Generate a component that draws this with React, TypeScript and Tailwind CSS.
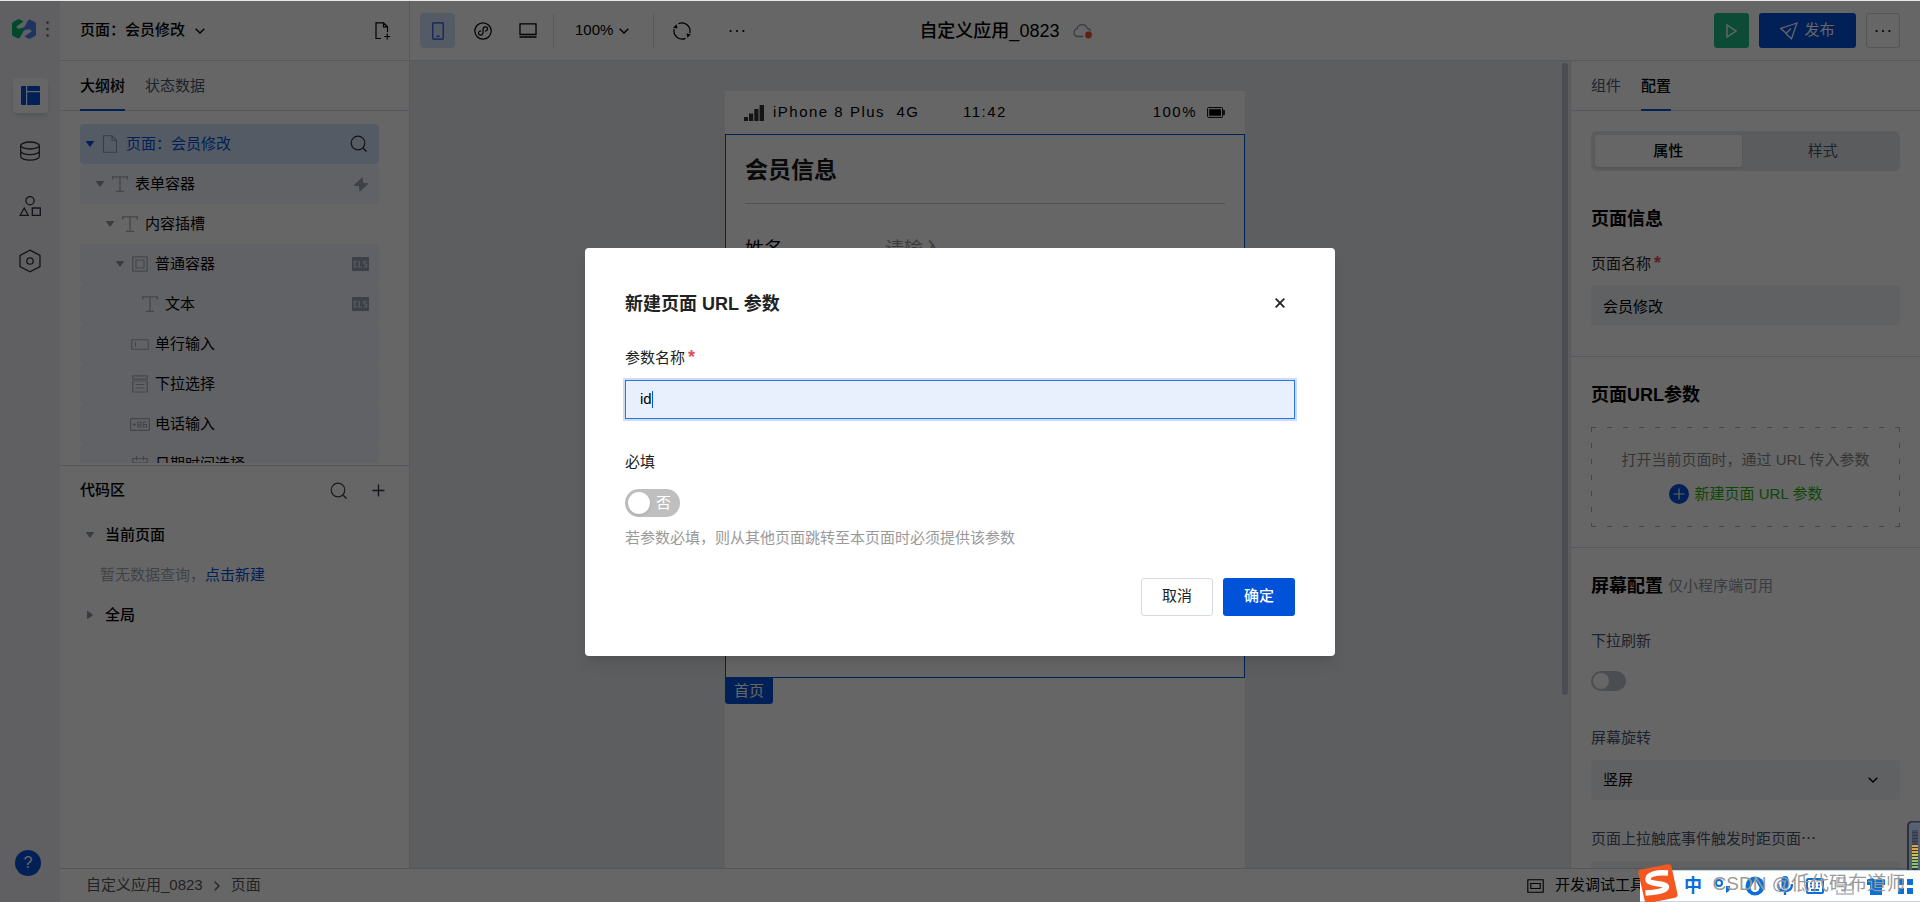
import type { ReactNode } from "react";

interface IconProps {
  className?: string;
}

interface TreeRow {
  label: string;
  icon: ReactNode;
  indent: string;
  open?: boolean;
  plain?: boolean;
  badge?: ReactNode;
}

function Search({ className = "" }: IconProps) {
  return (
    <svg className={className} width="18" height="18" viewBox="0 0 18 18" fill="none" stroke="currentColor">
      <circle cx="8" cy="8" r="6.8" strokeWidth="1.2" />
      <path d="M13 13l3.5 3.5" strokeWidth="1.5" />
    </svg>
  );
}

function ChevronDown({ className = "" }: IconProps) {
  return (
    <svg className={className} width="10" height="6" viewBox="0 0 10 6" fill="none" stroke="currentColor" strokeWidth="1.4">
      <path d="M.7.7L5 5 9.3.7" />
    </svg>
  );
}

function Caret({ className = "" }: IconProps) {
  return (
    <svg className={className} width="8" height="6" viewBox="0 0 8 6" fill="currentColor">
      <path d="M.5 0h7a.5.5 0 0 1 .4.8L4.4 5.6a.5.5 0 0 1-.8 0L.1.8A.5.5 0 0 1 .5 0z" />
    </svg>
  );
}

function Dots() {
  return (
    <svg width="16" height="4" viewBox="0 0 16 4" fill="currentColor">
      <circle cx="1.6" cy="2" r="1.1" />
      <circle cx="8" cy="2" r="1.1" />
      <circle cx="14.4" cy="2" r="1.1" />
    </svg>
  );
}

function TextIcon() {
  return (
    <svg width="16" height="16" viewBox="0 0 16 16" fill="none" stroke="currentColor" strokeWidth="1.3">
      <path d="M.7 3.5V.8h14.6v2.7M8 .8v14.4M4 15.3h8" />
    </svg>
  );
}

function BoxIcon() {
  return (
    <svg width="16" height="16" viewBox="0 0 16 16" fill="none" stroke="currentColor" strokeWidth="1.2">
      <path d="M.8.8h14.4v14.4H.8zM4 4h8v8H4z" />
    </svg>
  );
}

function InputIcon() {
  return (
    <svg width="18" height="11" viewBox="0 0 18 11" fill="none" stroke="currentColor" strokeWidth="1.1">
      <rect x=".7" y=".7" width="16.6" height="9.6" rx=".5" />
      <path d="M4.5 3v5" />
    </svg>
  );
}

function SelectIcon() {
  return (
    <svg width="16" height="18" viewBox="0 0 16 18" fill="none" stroke="currentColor" strokeWidth="1.2">
      <path d="M.8.8h14.4v3.4H.8zM.8 6h14.4v11H.8zM3.5 9.5h9M3.5 13h9" />
    </svg>
  );
}

function PhoneInputIcon() {
  return (
    <svg width="20" height="13" viewBox="0 0 20 13" fill="none" stroke="currentColor">
      <rect x=".6" y=".6" width="18.8" height="11.8" rx=".6" strokeWidth="1.2" />
      <path d="M2.500 6.500h3.600M4.300 4.700v3.600M8 4h3v5H8zM8 6.500h3M16.500 4h-3v5h3V6.500h-3" strokeWidth="1.2" />
    </svg>
  );
}

function CalendarIcon() {
  return (
    <svg width="16" height="16" viewBox="0 0 16 16" fill="none" stroke="currentColor" strokeWidth="1.2">
      <path d="M.8 2.5h14.4v12.7H.8zM.8 7h14.4M4.5 0v4.5M11.5 0v4.5" />
    </svg>
  );
}

function ClsBadge() {
  return (
    <svg width="17" height="14" viewBox="0 0 17 14">
      <rect width="17" height="14" rx="1" fill="#99a1b5" />
      <path d="M5.200 4.300H2.500v5.700h2.700M7.200 3.800V10h2.600M14.700 4.300h-2.700V7h2.500v3h-2.700" fill="none" stroke="#e2e5ec" strokeWidth="1.200" />
    </svg>
  );
}

function Bolt() {
  return (
    <svg width="16" height="15" viewBox="0 0 14 14" fill="#9aa3b5">
      <path d="M8.500 0L.3 7.600l.3.800H5L5.600 14l8.100-7.400-.3-.9H9z" />
    </svg>
  );
}

const rows: TreeRow[] = [
  { label: "表单容器", icon: <TextIcon />, indent: "pl-4", open: true, badge: <Bolt /> },
  { label: "内容插槽", icon: <TextIcon />, indent: "pl-[26px]", open: true, plain: true },
  { label: "普通容器", icon: <BoxIcon />, indent: "pl-9", open: true, badge: <ClsBadge /> },
  { label: "文本", icon: <TextIcon />, indent: "pl-[46px]", badge: <ClsBadge /> },
  { label: "单行输入", icon: <InputIcon />, indent: "pl-9" },
  { label: "下拉选择", icon: <SelectIcon />, indent: "pl-9" },
  { label: "电话输入", icon: <PhoneInputIcon />, indent: "pl-9" },
  { label: "日期时间选择", icon: <CalendarIcon />, indent: "pl-9" },
];

function Rail() {
  return (
    <nav className="flex w-[60px] shrink-0 flex-col items-center bg-[#eff1f4] text-[#2b303b]">
      <div className="flex h-[60px] w-full items-center gap-2.5 pl-3 pb-4 pt-3">
        <svg width="24" height="20" viewBox="0 0 24 20">
          <path d="M0 4.500Q0 3.500 1 3L6 .3Q7 0 8 .5L11.500 2.500 4.500 7.500Q4 9 6 9.600 9 10 14 7.500L8 18.500Q6.500 20 5 19L1 17Q0 16.500 0 15.500z" fill="#07b472" />
          <path d="M24 15.500Q24 16.500 23 17L18 19.700Q17 20 16 19.500L12.500 17.500 19.500 12.500Q20 11 18 10.400 15 10 10 12.500L16 1.500Q17.500 0 19 1L23 3Q24 3.500 24 4.500z" fill="#4a86f0" />
        </svg>
        <svg width="3" height="16" viewBox="0 0 3 16" fill="#5b6478">
          <circle cx="1.500" cy="1.500" r="1.300" />
          <circle cx="1.500" cy="8" r="1.300" />
          <circle cx="1.500" cy="14.500" r="1.300" />
        </svg>
      </div>
      <button aria-label="布局" className="mt-[17px] flex size-[35px] items-center justify-center rounded bg-white text-[#0052d9] shadow-md">
        <svg width="19" height="19" viewBox="0 0 19 19" fill="currentColor">
          <path d="M1 0h4v19H1a1 1 0 0 1-1-1V1a1 1 0 0 1 1-1zM6.200 0H18a1 1 0 0 1 1 1v4H6.200zM6.200 6.200H19V18a1 1 0 0 1-1 1H6.200z" />
        </svg>
      </button>
      <button aria-label="数据" className="mt-5 flex size-[35px] items-center justify-center">
        <svg width="20" height="20" viewBox="0 0 20 20" fill="none" stroke="currentColor" strokeWidth="1.300">
          <ellipse cx="10" cy="4.500" rx="9.300" ry="3.500" />
          <path d="M.7 4.500v11c0 2 4.200 3.600 9.300 3.600s9.300-1.600 9.300-3.600v-11M.7 10c0 2 4.200 3.600 9.300 3.600s9.300-1.600 9.300-3.600" />
        </svg>
      </button>
      <button aria-label="组件" className="mt-5 flex size-[35px] items-center justify-center">
        <svg width="22" height="20" viewBox="0 0 22 20" fill="none" stroke="currentColor" strokeWidth="1.300">
          <circle cx="11" cy="4.700" r="4.100" />
          <path d="M5.200 12l4 7.300H1.200zM13.300 12h8v7.300h-8z" />
        </svg>
      </button>
      <button aria-label="设置" className="mt-5 flex size-[35px] items-center justify-center">
        <svg width="22" height="24" viewBox="0 0 22 24" fill="none" stroke="currentColor" strokeWidth="1.300">
          <path d="M11 1.200l10 5.200v11.200l-10 5.200-10-5.200V6.400z" />
          <circle cx="11" cy="12" r="3.200" />
        </svg>
      </button>
      <button aria-label="帮助" className="mt-auto mb-[26px] mr-1 flex size-[26px] items-center justify-center rounded-full bg-[#0052d9] text-base leading-none text-white">
        ?
      </button>
    </nav>
  );
}

function TopBar() {
  return (
    <header className="flex h-[60px] shrink-0 border-b border-[#dcdfe6] text-[15px] text-black">
      <div className="flex w-[350px] shrink-0 items-center border-r border-[#dcdfe6] pl-5 pr-[18px]">
        <button className="flex items-center gap-2.5 font-medium">
          页面：会员修改
          <ChevronDown />
        </button>
        <button aria-label="新建页面" className="ml-auto">
          <svg width="16" height="18" viewBox="0 0 16 18" fill="none" stroke="currentColor" strokeWidth="1.200">
            <path d="M6 16.500H1V.8h7.500l4 4V10M8.500.8v4h4M12.200 11.500v6M9.200 14.500h6" />
          </svg>
        </button>
      </div>
      <div className="flex flex-1 items-center pl-2.5">
        <button aria-label="手机" className="flex size-[35px] items-center justify-center rounded bg-[#d5e3fc] text-[#1f4fd8]">
          <svg width="12" height="18" viewBox="0 0 12 18" fill="none" stroke="currentColor" strokeWidth="1.200">
            <rect x=".8" y=".8" width="10.400" height="16.400" rx=".6" />
            <path d="M4.200 14.200h3.600" />
          </svg>
        </button>
        <button aria-label="小程序" className="ml-2.5 flex size-[35px] items-center justify-center">
          <svg width="18" height="18" viewBox="0 0 18 18" fill="none" stroke="currentColor" strokeWidth="1.200">
            <circle cx="9" cy="9" r="8.200" />
            <path d="M7 8.800C5.200 9 4.200 10.300 4.500 11.600c.5 2.200 4.500 2 4.500-.8V7.200c0-2.800 4-3 4.500-.8.3 1.300-.7 2.600-2.500 2.800" />
          </svg>
        </button>
        <button aria-label="电脑" className="ml-2.5 flex size-[35px] items-center justify-center">
          <svg width="18" height="15" viewBox="0 0 18 15" fill="none" stroke="currentColor" strokeWidth="1.300">
            <path d="M1 .8h16v10.700H1zM.5 14h17" />
          </svg>
        </button>
        <div className="ml-2 h-[34px] w-px bg-[#dcdfe6]" />
        <button className="ml-[21px] flex items-center gap-1.5">
          100%
          <ChevronDown />
        </button>
        <div className="ml-6 h-[34px] w-px bg-[#dcdfe6]" />
        <button aria-label="刷新" className="ml-[19px]">
          <svg width="18" height="18" viewBox="0 0 18 18" fill="none" stroke="currentColor" strokeWidth="1.200">
            <path d="M5.500 1.600a8.200 8.200 0 0 1 11.300 9.400M12.500 16.400A8.200 8.200 0 0 1 1.200 7" />
            <path d="M13.500 11.500l1 4.200 3.300-3.400zM4.500 6.500L3.500 2.300.2 5.700z" fill="currentColor" stroke="none" />
          </svg>
        </button>
        <button aria-label="更多" className="ml-[38px]">
          <Dots />
        </button>
        <div className="ml-[174px] flex items-center gap-3.5">
          <h1 className="text-lg leading-none font-medium">自定义应用_0823</h1>
          <svg width="20" height="16" viewBox="0 0 20 16" fill="none">
            <path d="M10 13.500H5a4 4 0 0 1-.8-7.900 5.200 5.200 0 0 1 10-.5 4 4 0 0 1 3.300 3.400" stroke="#8a93a6" strokeWidth="1.300" />
            <circle cx="15.500" cy="12" r="3.400" fill="#e8562a" />
          </svg>
        </div>
        <div className="ml-auto flex items-center gap-2.5 pr-5">
          <button aria-label="预览" className="flex size-[35px] items-center justify-center rounded-[3px] bg-[#20bf87] text-white">
            <svg width="11" height="14" viewBox="0 0 11 14" fill="none" stroke="currentColor" strokeWidth="1.400">
              <path d="M1 1l9 6-9 6z" />
            </svg>
          </button>
          <button className="flex h-[35px] w-[97px] items-center justify-center gap-1.5 rounded-[3px] bg-[#0052d9] text-white">
            <svg width="18" height="18" viewBox="0 0 18 18" fill="none" stroke="currentColor" strokeWidth="1.300">
              <path d="M17 1L.8 6.500l4.500 4 1 1.500 5.200 4.800zM6.500 11l4.500-4.500" />
            </svg>
            发布
          </button>
          <button aria-label="更多操作" className="flex h-[35px] w-[34px] items-center justify-center rounded-[3px] border border-[#cfd5de]">
            <Dots />
          </button>
        </div>
      </div>
    </header>
  );
}

function LeftPanel() {
  return (
    <aside className="flex w-[350px] shrink-0 flex-col border-r border-[#dcdfe6] text-[15px] text-black">
      <div className="flex h-[50px] shrink-0 gap-5 border-b border-[#dcdfe6] px-5">
        <button className="-mb-px border-b-2 border-[#0052d9] pt-[3px] font-medium">大纲树</button>
        <button className="pt-0.5 text-[#4b5770]">状态数据</button>
      </div>
      <div className="h-[355px] shrink-0 border-b border-[#d4d7de] pb-0.5">
        <ul className="h-full overflow-hidden pl-5 pr-[30px] pt-[13px]">
          <li className="flex h-10 items-center rounded bg-[#d5e3fc] pl-1.5 pr-[11px] text-[#0052d9]">
            <Caret />
            <svg className="ml-2 text-[#8d96a8]" width="16" height="18" viewBox="0 0 16 18" fill="none" stroke="currentColor" strokeWidth="1.100">
              <path d="M1.500.7h8.500l4.500 4.500v12.100h-13zM10 .7v4.500h4.500" />
            </svg>
            <span className="ml-2">页面：会员修改</span>
            <Search className="ml-auto text-[#2b303b]" />
          </li>
          {rows.map((row) => (
            <li
              key={row.label}
              className={`flex h-10 items-center rounded pr-2.5 ${row.indent} ${row.plain ? "" : "bg-[#f3f5fd]"}`}
            >
              <span className="w-2 text-[#8d96a8]">{row.open && <Caret />}</span>
              <span className="ml-1.5 flex w-5 justify-center text-[#a6adba]">{row.icon}</span>
              <span className="ml-[5px]">{row.label}</span>
              <span className="ml-auto">{row.badge}</span>
            </li>
          ))}
        </ul>
      </div>
      <div className="flex h-[49px] shrink-0 items-center pl-5 pr-6">
        <h2 className="font-medium">代码区</h2>
        <button aria-label="搜索代码" className="ml-auto text-[#3c4250]">
          <Search />
        </button>
        <button aria-label="新增代码" className="ml-6 text-[#2b303b]">
          <svg width="13" height="13" viewBox="0 0 13 13" stroke="currentColor" strokeWidth="1.300">
            <path d="M6.500.5v12M.5 6.500h12" />
          </svg>
        </button>
      </div>
      <div className="flex h-10 items-center gap-[11px] pl-[26px] font-medium">
        <Caret className="text-[#8d96a8]" />
        当前页面
      </div>
      <p className="flex h-10 items-center pl-10 text-[#a0a7b5]">
        暂无数据查询，
        <a href="#new" className="text-[#0052d9]">点击新建</a>
      </p>
      <div className="flex h-10 items-center gap-[11px] pl-[26px] font-medium">
        <Caret className="-rotate-90 text-[#8d96a8]" />
        全局
      </div>
    </aside>
  );
}

function Canvas() {
  return (
    <main className="flex flex-1 overflow-hidden bg-[#e7eaee] pt-[30px]">
      <div className="flex flex-1 justify-center">
        <div className="w-[520px] bg-white text-black">
          <div className="flex h-[43px] items-center pr-5 pl-[19px] text-[15px] tracking-widest">
            <svg width="20" height="16" viewBox="0 0 20 16" fill="#333">
              <path d="M0 12h4v4H0zM5 8.500h4.200V16H5zM10.300 4h4.200v12h-4.200zM15.600 0H20v16h-4.400z" />
            </svg>
            <span className="ml-[9px] flex-1">iPhone 8 Plus&nbsp; 4G</span>
            <span>11:42</span>
            <span className="flex-1 pr-2.5 text-right">100%</span>
            <svg width="18" height="11" viewBox="0 0 18 11">
              <rect x=".6" y=".6" width="15" height="9.800" rx="1" fill="none" stroke="#000" />
              <path d="M2.200 2.200h11.800v6.600H2.200zM16.200 3h1.600v5h-1.600z" />
            </svg>
          </div>
          <div className="h-[544px] border border-[#0052d9] px-[19px]">
            <h2 className="flex h-[69px] items-center border-b border-[#d0d0d0] pt-0.5 text-[23px] font-bold text-[#1a1a1a]">会员信息</h2>
            <label className="mt-8 flex text-[19px] leading-7">
              <span className="w-[140px]">姓名</span>
              <input className="flex-1 placeholder:text-[#9a9a9a]" placeholder="请输入" />
            </label>
          </div>
          <span className="inline-block rounded-b-[3px] bg-[#0052d9] px-[9px] text-[15px] leading-[26px] text-white">首页</span>
        </div>
      </div>
      <div className="-mt-[28px] mr-0.5 h-[632px] w-2 pl-0.5">
        <div className="h-full w-1.5 rounded-full bg-[#b9c0cb]" />
      </div>
    </main>
  );
}

function RightPanel() {
  return (
    <aside className="flex w-[350px] shrink-0 flex-col overflow-hidden border-l border-[#dcdfe6] text-[15px] text-black">
      <div className="flex h-[50px] shrink-0 gap-5 border-b border-[#dcdfe6] px-5">
        <button className="pt-0.5 text-[#4b5770]">组件</button>
        <button className="-mb-px border-b-2 border-[#0052d9] pt-[3px] font-medium">配置</button>
      </div>
      <div className="h-[246px] shrink-0 border-b border-[#dcdfe6] px-5 pt-5">
        <div className="flex h-10 rounded-md bg-[#e4e7ec] p-1">
          <button className="flex-1 rounded-[3px] bg-white font-medium shadow-sm">属性</button>
          <button className="flex-1 pl-2 text-[#4b5770]">样式</button>
        </div>
        <h2 className="mt-9 text-lg leading-6 font-bold">页面信息</h2>
        <label htmlFor="page-name" className="mt-[22px] block h-[22px] leading-[22px] text-[#222]">
          页面名称<span className="ml-[3px] text-lg leading-none font-bold text-[#e34d59]">*</span>
        </label>
        <input
          id="page-name"
          className="mt-2.5 h-10 w-full rounded bg-[#f0f2f5] px-3 text-black"
          defaultValue="会员修改"
        />
      </div>
      <div className="h-[191px] shrink-0 border-b border-[#dcdfe6] px-5 pt-[26px]">
        <h2 className="text-lg leading-6 font-bold">页面URL参数</h2>
        <div className="mt-5 flex h-[100px] flex-col items-center justify-center gap-2.5 bg-[linear-gradient(90deg,#a9afba_33%,transparent_33%),linear-gradient(90deg,#a9afba_33%,transparent_33%),linear-gradient(#a9afba_33%,transparent_33%),linear-gradient(#a9afba_33%,transparent_33%)] bg-[length:16px_1px,16px_1px,1px_16px,1px_16px] bg-[position:0_0,0_100%,0_0,100%_0] [background-repeat:repeat-x,repeat-x,repeat-y,repeat-y]">
          <p className="leading-6 text-[#888]">打开当前页面时，通过 URL 传入参数</p>
          <button className="flex items-center gap-1.5 leading-6 text-[#25b315]">
            <svg width="20" height="20" viewBox="0 0 20 20">
              <circle cx="10" cy="10" r="10" fill="#0052d9" />
              <path d="M10 4.500v11M4.500 10h11" stroke="#fff" strokeWidth="1.200" />
            </svg>
            新建页面 URL 参数
          </button>
        </div>
      </div>
      <div className="px-5 pt-[26px]">
        <h2 className="flex items-center gap-[5px] text-lg leading-6 font-bold">
          屏幕配置
          <small className="text-[15px] font-normal text-[#8d96a8]">仅小程序端可用</small>
        </h2>
        <label htmlFor="pull" className="mt-8 block leading-[22px] text-[#4b5770]">下拉刷新</label>
        <input
          id="pull"
          type="checkbox"
          role="switch"
          className="mt-[19px] block h-5 w-[35px] appearance-none rounded-full bg-[#b9c0cb] before:m-0.5 before:block before:size-4 before:rounded-full before:bg-white"
        />
        <label htmlFor="rotate" className="mt-9 block leading-[22px] text-[#4b5770]">屏幕旋转</label>
        <div className="mt-[11px] flex items-center rounded bg-[#f0f2f5] pr-[22px]">
          <select id="rotate" className="h-10 flex-1 appearance-none px-3 text-black">
            <option>竖屏</option>
          </select>
          <ChevronDown />
        </div>
        <label htmlFor="distance" className="mt-[27px] block h-[22px] font-['Noto_Sans_CJK_SC',sans-serif] leading-[22px] text-[#4b5770]">页面上拉触底事件触发时距页面⋯</label>
        <input id="distance" className="mt-3 h-10 w-full rounded bg-[#f0f2f5]" />
      </div>
    </aside>
  );
}

function Footer() {
  return (
    <footer className="flex h-[34px] shrink-0 items-center border-t border-[#d4d7de] pl-[26px] text-[15px] text-[#555]">
      <span>自定义应用_0823</span>
      <svg className="mx-[11px]" width="6" height="10" viewBox="0 0 6 10" fill="none" stroke="currentColor" strokeWidth="1.300">
        <path d="M.7.7L5 5 .7 9.300" />
      </svg>
      <span>页面</span>
      <button className="ml-auto mr-[275px] flex items-center gap-[11px] text-black">
        <svg width="17" height="14" viewBox="0 0 17 14" fill="none" stroke="currentColor" strokeWidth="1.100">
          <path d="M.8.8h15.400v12.400H.8zM3.800 4.500h9.400v5H3.800z" />
        </svg>
        开发调试工具
      </button>
    </footer>
  );
}

function UrlParamDialog() {
  return (
    <div className="absolute inset-x-0 top-px bottom-0 flex items-center justify-center bg-black/60">
      <div role="dialog" aria-labelledby="dialog-title" className="w-[750px] rounded bg-white px-10 pt-10 pb-10 text-[15px] text-[#222] shadow-lg">
        <div className="flex h-[30px] items-center justify-between">
          <h2 id="dialog-title" className="pt-0.5 text-lg leading-none font-bold">新建页面 URL 参数</h2>
          <button aria-label="关闭" className="mr-2.5">
            <svg width="10" height="10" viewBox="0 0 10 10" stroke="#222" strokeWidth="1.800">
              <path d="M.7.7l8.600 8.600M9.300.7L.7 9.300" />
            </svg>
          </button>
        </div>
        <label htmlFor="param-name" className="mt-7 block h-6 leading-6">
          参数名称<span className="ml-[3px] text-lg leading-none font-bold text-[#e34d59]">*</span>
        </label>
        <div className="mt-2.5 flex h-[39px] items-center border border-[#2a75e6] bg-[#e8effd] px-3.5 ring-2 ring-[#ccdcf8]">
          <input id="param-name" className="field-sizing-content text-black outline-none" defaultValue="id" />
          <span className="h-[17px] w-px bg-[#0052d9]" />
        </div>
        <label htmlFor="required" className="mt-[31px] block leading-6">必填</label>
        <div className="relative mt-[15px] h-7 w-[55px]">
          <input
            id="required"
            type="checkbox"
            role="switch"
            className="block h-7 w-full appearance-none rounded-full bg-[#bfbfbf] before:m-[3px] before:block before:size-[22px] before:rounded-full before:bg-white before:shadow"
          />
          <span className="pointer-events-none absolute top-0 right-[9px] leading-7 text-white">否</span>
        </div>
        <p className="mt-[9px] leading-6 text-[#999]">若参数必填，则从其他页面跳转至本页面时必须提供该参数</p>
        <div className="mt-7 flex justify-end gap-2.5">
          <button className="h-[38px] w-[72px] rounded-[3px] border border-[#d5dae3]">取消</button>
          <button className="h-[38px] w-[72px] rounded-[3px] bg-[#0052d9] font-medium text-white">确定</button>
        </div>
      </div>
    </div>
  );
}

function VolumeMeter() {
  return (
    <svg className="absolute right-0 bottom-8" width="13" height="49" viewBox="0 0 13 49">
      <path d="M13 0H5Q0 0 0 5v44h13z" fill="#2c3142" />
      <path d="M13 1.500H5.500Q2 1.500 2 5v44h11z" fill="#596074" />
      <path d="M5 9h6v40H5z" fill="#343a4a" />
      <path d="M5 10h6M5 13h6M5 16h6M5 19h6M5 22h6" stroke="#555c70" />
      <path d="M5 25h6M5 28h6M5 31h6" stroke="#dca83c" strokeWidth="2" />
      <path d="M5 34h6M5 37h6" stroke="#c3c94c" strokeWidth="2" />
      <path d="M5 40h6M5 43h6M5 46h6" stroke="#8ac66a" strokeWidth="2" />
    </svg>
  );
}

function InputMethodBar() {
  return (
    <div className="absolute right-0 bottom-0 flex h-8 w-[280px] items-center justify-end border-y border-[#b9d6ec] bg-white text-[#0a6fd6]">
      <svg className="absolute -bottom-px -left-0.5" width="40" height="38" viewBox="0 0 40 38">
        <path d="M3 5.500L30 .2Q33 0 33.500 2.500L39.500 30Q40 33 37 33.700L16 38H7L.3 9Q0 6.200 3 5.500z" fill="#f4571f" />
        <path d="M30 9C18 8 9.500 10.500 10 15.500 10.500 21 28 18.500 28.500 23 28.800 27 16 28.500 7.500 29" fill="none" stroke="#fff" strokeWidth="5.500" />
      </svg>
      <div className="flex w-[236px] items-center justify-between pr-1.5">
        <span className="text-lg font-bold">中</span>
        <svg width="18" height="18" viewBox="0 0 18 18" fill="currentColor">
          <circle cx="5" cy="6" r="3" fill="none" stroke="currentColor" strokeWidth="2" />
          <path d="M12 9h4q1 5-4 7z" />
        </svg>
        <svg width="20" height="20" viewBox="0 0 20 20">
          <circle cx="10" cy="10" r="9.500" fill="currentColor" />
          <path d="M10 3.500l4.500 8a4.500 4.500 0 0 1-9 0z" fill="#fff" />
        </svg>
        <svg width="16" height="20" viewBox="0 0 16 20" fill="currentColor">
          <rect x="4.500" width="7" height="13" rx="3.500" />
          <path d="M1 8q0 7 7 7t7-7M8 15v4" fill="none" stroke="currentColor" strokeWidth="2.400" />
        </svg>
        <svg width="18" height="16" viewBox="0 0 18 16" fill="none" stroke="currentColor" strokeWidth="2">
          <rect x="1" y="1" width="16" height="14" rx="1" />
          <path d="M4 5.500h2M8 5.500h2M12 5.500h2M4 8.500h2M8 8.500h2M12 8.500h2M5 12h8" />
        </svg>
        <svg className="text-[#c3c7cc]" width="18" height="18" viewBox="0 0 18 18" fill="none" stroke="currentColor" strokeWidth="2">
          <path d="M1 1h8v7H1zM9 8h8v9H1v-4M9 8v9M5 13h12" />
        </svg>
        <svg width="18" height="17" viewBox="0 0 18 17" fill="currentColor">
          <path d="M0 1.500L5.500 0Q9 3 12.500 0L18 1.500V7h-3v10H3V7H0z" />
        </svg>
        <svg width="17" height="17" viewBox="0 0 17 17" fill="currentColor">
          <path d="M1 1h6v6H1zM10 1h6v6h-6zM1 10h6v6H1zM10 10h6v6h-6z" />
        </svg>
      </div>
      <span className="absolute top-0 right-[15px] text-[19px] leading-[26px] whitespace-nowrap text-[#9a9a9a]">CSDN @低代码布道师</span>
    </div>
  );
}

export default function App() {
  return (
    <div className="relative h-screen overflow-hidden bg-white font-['Liberation_Sans','Noto_Sans_CJK_SC',sans-serif]">
      <div className="flex h-full border-t border-[#e3e8e6]">
        <Rail />
        <div className="flex min-w-0 flex-1 flex-col">
          <TopBar />
          <div className="flex min-h-0 flex-1">
            <LeftPanel />
            <Canvas />
            <RightPanel />
          </div>
          <Footer />
        </div>
      </div>
      <UrlParamDialog />
      <VolumeMeter />
      <InputMethodBar />
    </div>
  );
}
